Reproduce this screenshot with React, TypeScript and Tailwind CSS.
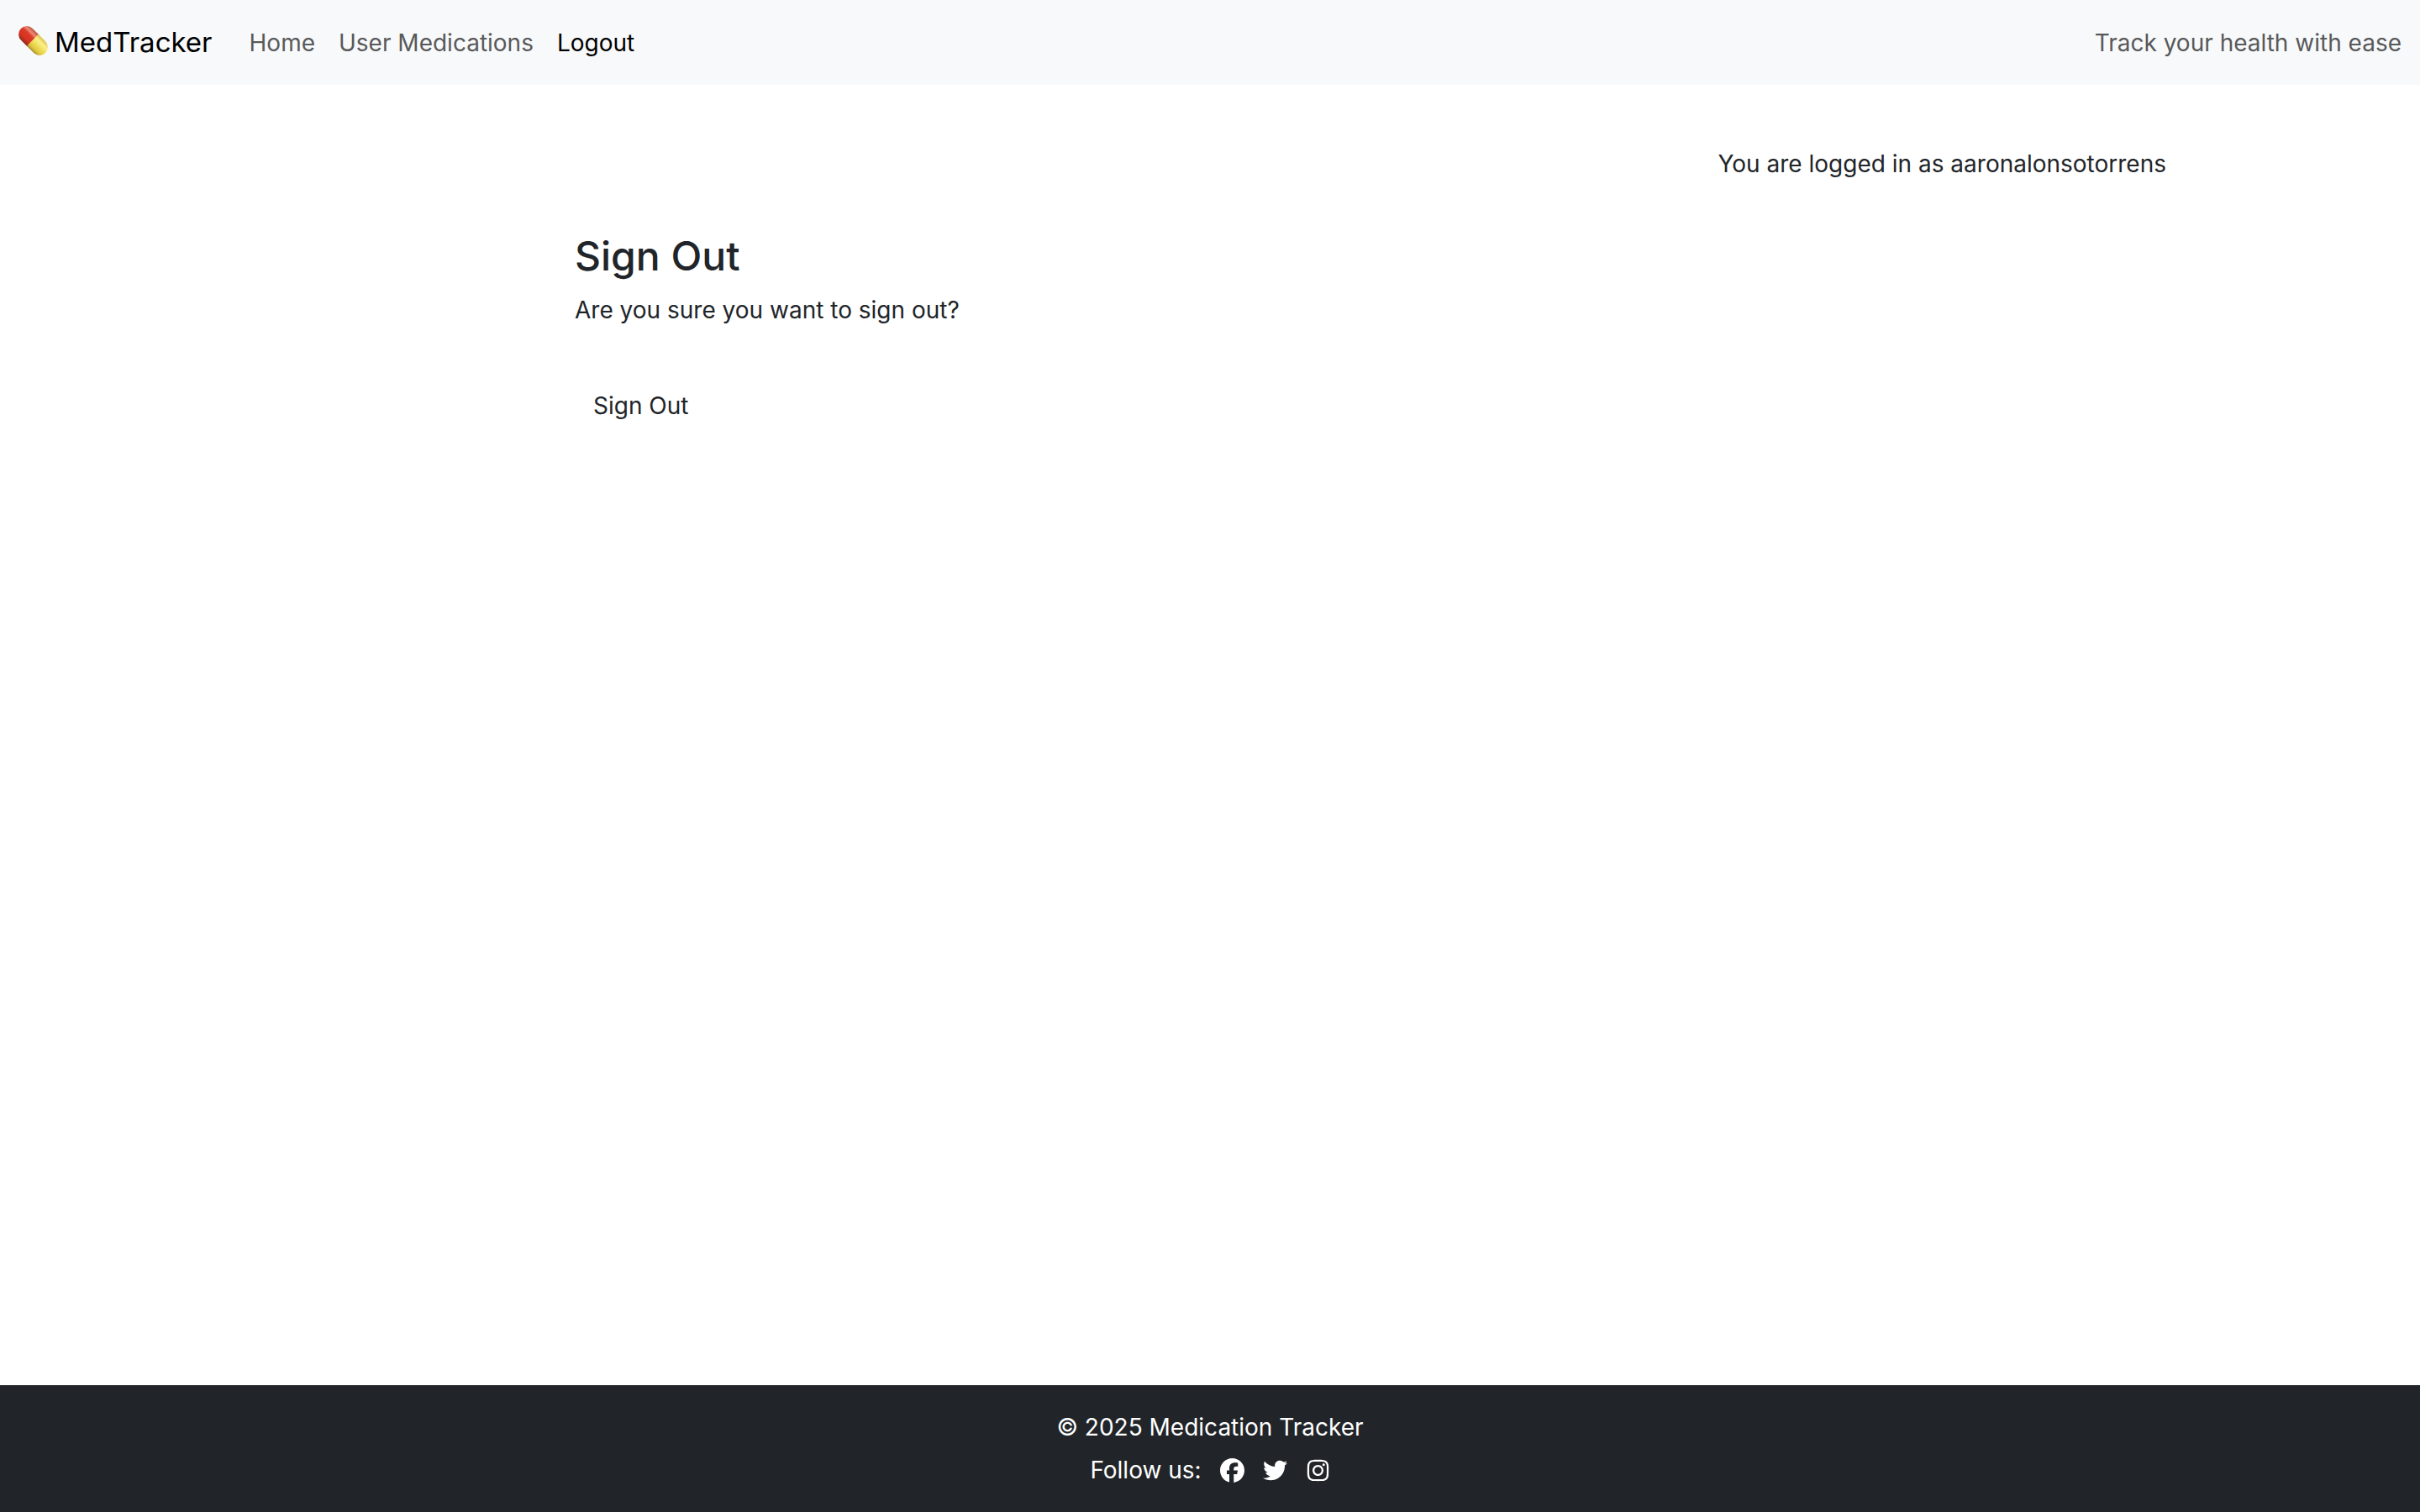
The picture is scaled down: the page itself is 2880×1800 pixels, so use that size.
import { FaFacebook, FaInstagram, FaTwitter } from "react-icons/fa6";

function Pill() {
  return (
    <svg viewBox="0 0 34 34" className="mb-1 size-[35px]" aria-hidden="true">
      <defs>
        <linearGradient id="red" x1="0" y1="0" x2="0" y2="1">
          <stop offset="0" stopColor="#b8503c" />
          <stop offset="0.22" stopColor="#ee8a78" />
          <stop offset="0.4" stopColor="#dc3a28" />
          <stop offset="0.75" stopColor="#d63322" />
          <stop offset="1" stopColor="#8e2a18" />
        </linearGradient>
        <linearGradient id="yellow" x1="0" y1="0" x2="0" y2="1">
          <stop offset="0" stopColor="#dcc04a" />
          <stop offset="0.25" stopColor="#faf08c" />
          <stop offset="0.6" stopColor="#ecd950" />
          <stop offset="0.82" stopColor="#dcc440" />
          <stop offset="1" stopColor="#a98a2c" />
        </linearGradient>
      </defs>
      <g transform="rotate(45 17 17)">
        <path d="M17 7.500H6.500a9.500 9.500 0 0 0 0 19H17z" fill="url(#red)" />
        <path d="M16 7.500H27.500a9.500 9.500 0 0 1 0 19H16z" fill="url(#yellow)" />
      </g>
    </svg>
  );
}

export default function App() {
  return (
    <div className="flex min-h-screen flex-col bg-white font-[Inter,sans-serif] text-[28px] leading-11 text-[#212529]">
      <header className="flex items-center justify-between bg-[#f8f9fa] px-[22px] py-7 text-[#58595a]">
        <nav className="flex items-center gap-7">
          <a href="#" className="mr-4 flex items-center gap-2 text-[33px] leading-[45px] text-black">
            <Pill />
            MedTracker
          </a>
          <a href="#">Home</a>
          <a href="#">User Medications</a>
          <a href="#" aria-current="page" className="text-black">
            Logout
          </a>
        </nav>
        <span>Track your health with ease</span>
      </header>

      <main className="mx-auto w-full max-w-[2276px] grow pt-18">
        <p className="text-right">You are logged in as aaronalonsotorrens</p>
        <section className="mx-auto mt-[58px] w-full max-w-[1512px]">
          <h1 className="text-5xl leading-15 font-medium">Sign Out</h1>
          <p className="mt-3">Are you sure you want to sign out?</p>
          <form className="mt-[58px]" onSubmit={(event) => event.preventDefault()}>
            <button type="submit" className="px-[22px] py-3">
              Sign Out
            </button>
          </form>
        </section>
      </main>

      <footer className="flex flex-col items-center gap-[7px] bg-[#212529] py-7 text-white">
        <p>© 2025 Medication Tracker</p>
        <div className="flex items-center gap-[22px]">
          <span>Follow us:</span>
          <a href="#" aria-label="Facebook">
            <FaFacebook className="h-[29px] w-auto" />
          </a>
          <a href="#" aria-label="Twitter">
            <FaTwitter className="h-[29px] w-auto" />
          </a>
          <a href="#" aria-label="Instagram">
            <FaInstagram className="h-[29px] w-auto" />
          </a>
        </div>
      </footer>
    </div>
  );
}
